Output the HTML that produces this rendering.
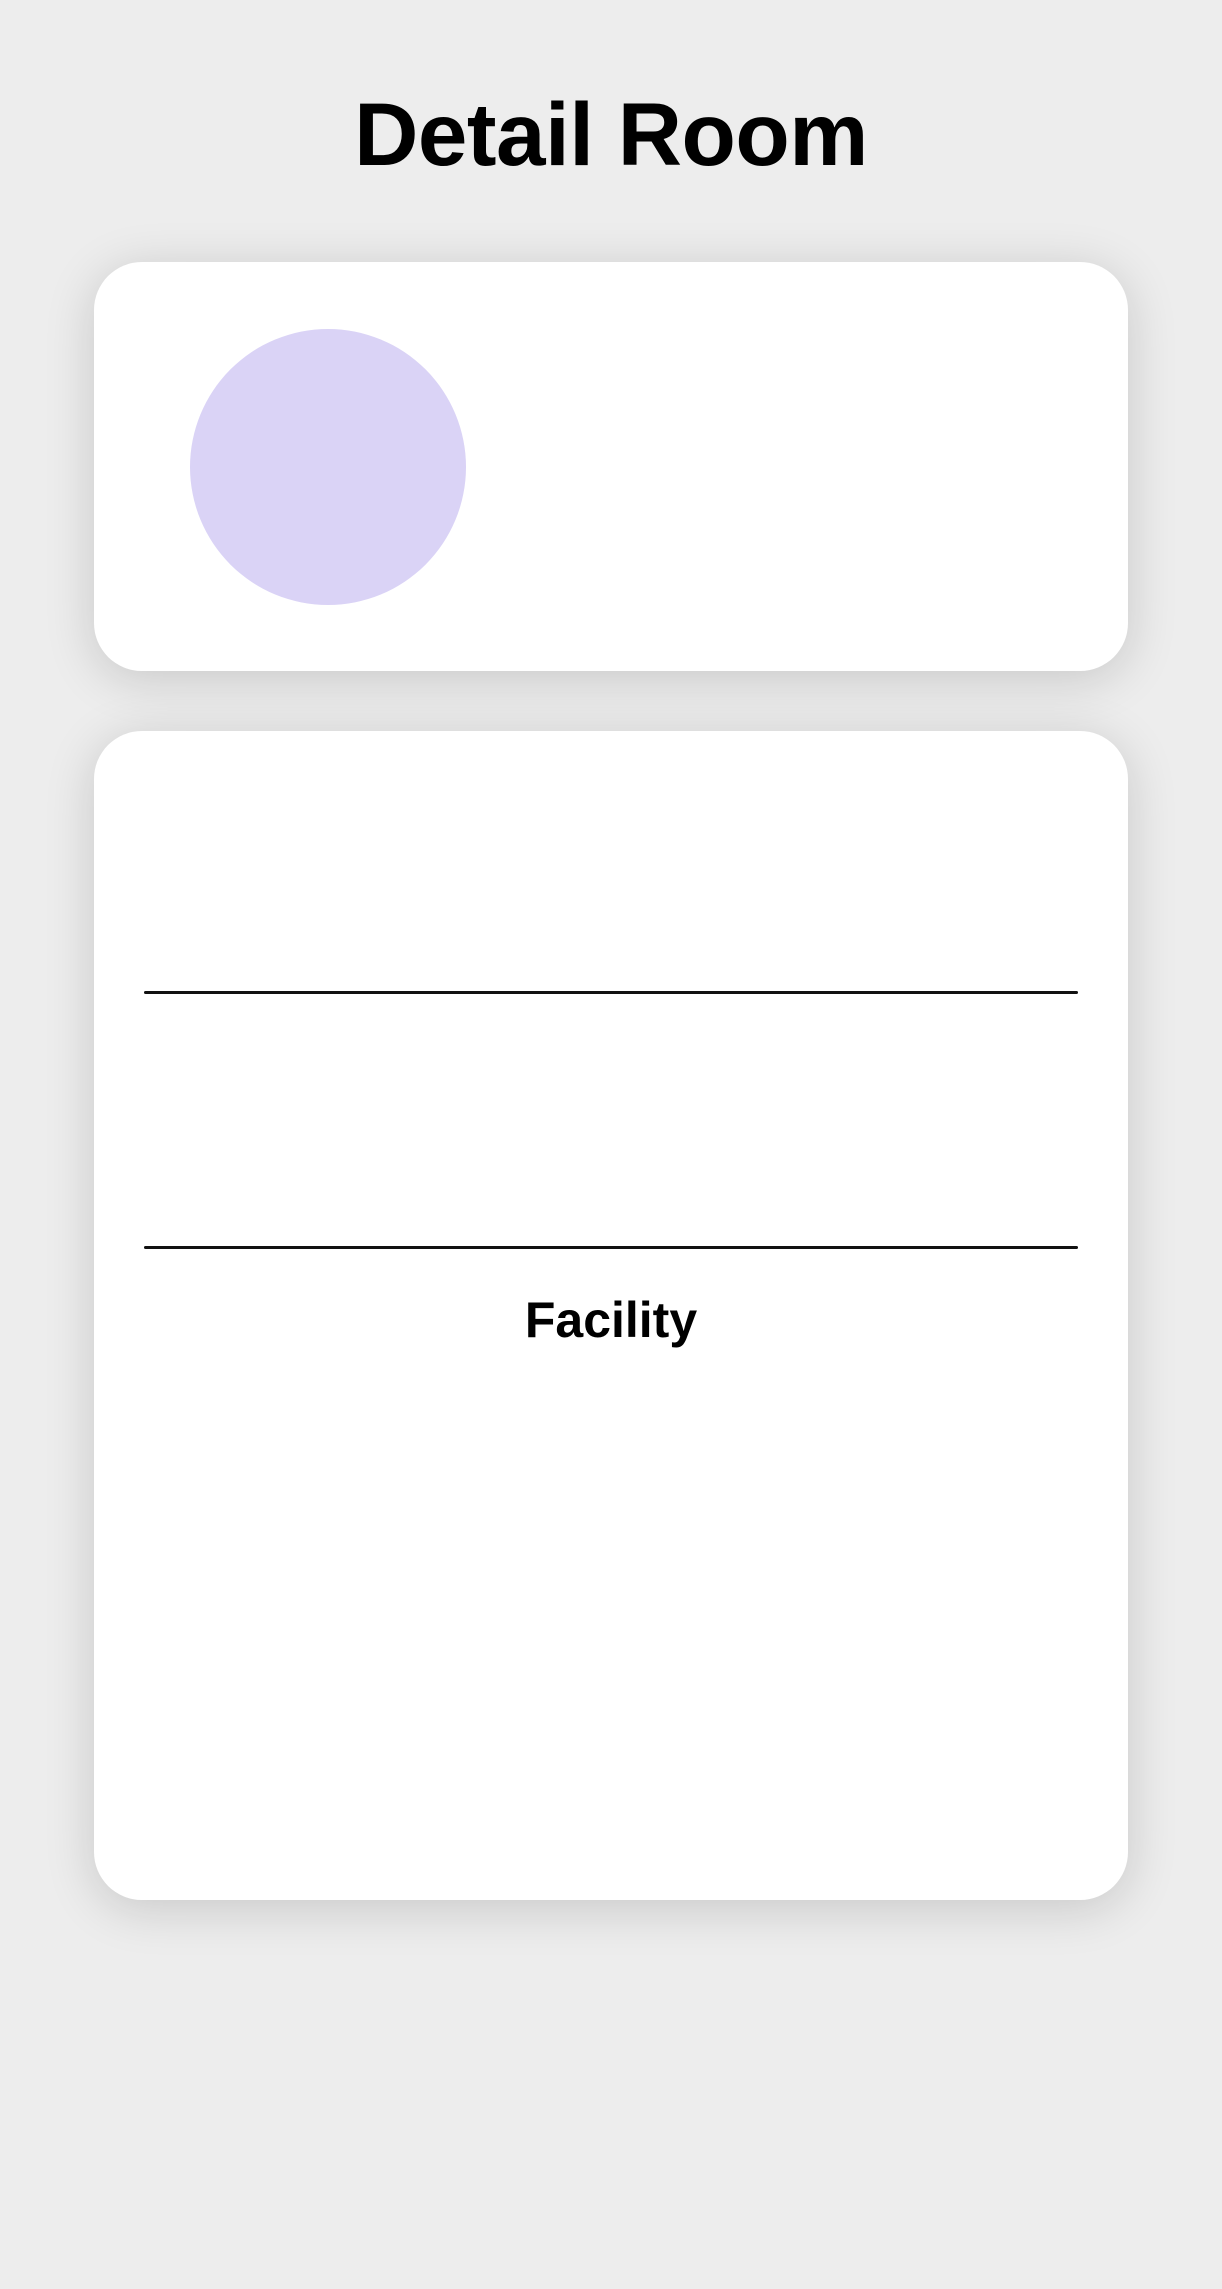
<!DOCTYPE html>
<html><head><style>
html,body{margin:0;padding:0}
body{width:1222px;height:2289px;background:#ededed;position:relative;font-family:"Liberation Sans",sans-serif;overflow:hidden}
h1{position:absolute;top:79px;left:0;width:1222px;text-align:center;margin:0;font-size:89px;line-height:110px;font-weight:bold;color:#000;letter-spacing:-0.5px}
.card{position:absolute;left:94px;width:1034px;background:#fff;border-radius:48px;box-shadow:0 8px 50px rgba(0,0,0,0.16)}
.c1{top:262px;height:409px}
.c2{top:731px;height:1169px}
.circle{position:absolute;left:96px;top:67px;width:276px;height:276px;border-radius:50%;background:#dad3f6}
.line{position:absolute;left:50px;width:934px;height:3px;background:#111;border-radius:2px}
.fac{position:absolute;left:0;width:1034px;text-align:center;top:559px;font-size:50px;line-height:60px;font-weight:bold;color:#000}
</style></head><body>
<h1>Detail Room</h1>
<div class="card c1"><div class="circle"></div></div>
<div class="card c2">
<div class="line" style="top:260px"></div>
<div class="line" style="top:515px"></div>
<div class="fac">Facility</div>
</div>
</body></html>
